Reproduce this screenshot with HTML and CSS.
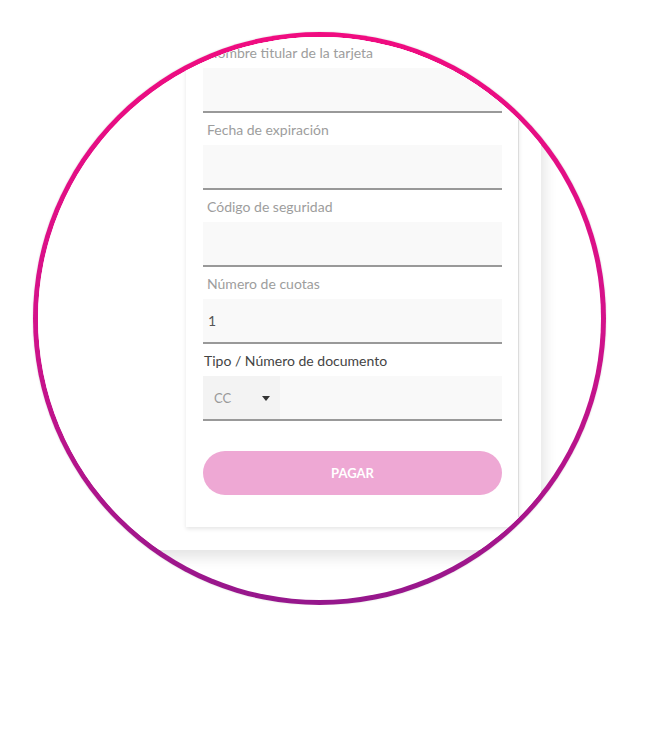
FILE: index.html
```html
<!DOCTYPE html>
<html lang="es">
<head>
    <meta charset="UTF-8">
    <meta name="viewport" content="width=device-width, initial-scale=1.0">
    <title>Pago con tarjeta</title>
    <link rel="stylesheet" href="styles.css">
</head>
<body>
    <div class="circle">
        <div class="panel">
            <form class="card">
                <div class="field">
                    <label class="label">Nombre titular de la tarjeta</label>
                    <div class="input"></div>
                </div>
                <div class="field">
                    <label class="label">Fecha de expiración</label>
                    <div class="input"></div>
                </div>
                <div class="field">
                    <label class="label">Código de seguridad</label>
                    <div class="input"></div>
                </div>
                <div class="field">
                    <label class="label">Número de cuotas</label>
                    <div class="input"><span class="value">1</span></div>
                </div>
                <div class="field">
                    <label class="label label-dark">Tipo / Número de documento</label>
                    <div class="input doc">
                        <div class="select">
                            <span>CC</span>
                            <span class="arrow"></span>
                        </div>
                    </div>
                </div>
                <button type="button" class="pay">PAGAR</button>
            </form>
        </div>
    </div>
</body>
</html>
```

FILE: styles.css
```css
body {
    margin: 0;
    padding: 0;
    background-color: #ffffff;
    font-family: Lato, "Open Sans", sans-serif;
}

.circle {
    width: 573px;
    height: 573px;
    margin: 32px 0 0 33px;
    box-sizing: border-box;
    border: 5px solid transparent;
    border-radius: 50%;
    background: linear-gradient(#ffffff, #ffffff) padding-box,
                linear-gradient(180deg, #f00c80 0%, #d4128a 50%, #95178c 100%) border-box;
    box-shadow: 0 0 2px rgba(0, 0, 0, 0.18);
    overflow: hidden;
}

.panel {
    width: 524px;
    margin-left: -21px;
    margin-top: -1px;
    box-sizing: border-box;
    padding: 0 22px 23px 169px;
    background: white;
    box-shadow: 4px 8px 12px rgba(0, 0, 0, 0.1);
}

.card {
    padding: 0 16px 32px 17px;
    background: white;
    border-right: 1px solid #dcdcdc;
    box-shadow: 0 2px 4px rgba(0, 0, 0, 0.1);
}

.label {
    display: block;
    padding: 9px 4px 7px;
    font-size: 14px;
    line-height: 16px;
    color: #9d9d9d;
}

.label-dark {
    padding-left: 1px;
    color: #444;
}

.input {
    display: flex;
    align-items: center;
    height: 43px;
    background: #f9f9f9;
    border-bottom: 2px solid #999;
}

.value {
    padding-left: 5px;
    font-size: 14px;
    color: #555;
}

.select {
    display: flex;
    align-items: center;
    justify-content: space-between;
    width: 77px;
    height: 100%;
    box-sizing: border-box;
    padding: 0 10px 0 11px;
    background: #f3f3f3;
    font-size: 13px;
    color: #999;
}

.arrow {
    width: 0;
    height: 0;
    margin-top: 2px;
    border-left: 4px solid transparent;
    border-right: 4px solid transparent;
    border-top: 5px solid #333;
}

.pay {
    display: block;
    width: 100%;
    height: 44px;
    margin-top: 30px;
    border: none;
    border-radius: 22px;
    background-color: #eea8d4;
    color: white;
    font-family: Lato, sans-serif;
    font-size: 13px;
    font-weight: bold;
    cursor: pointer;
}
```
